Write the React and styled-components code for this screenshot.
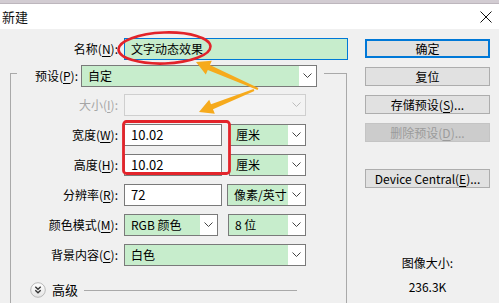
import React from "react";
import styled, { createGlobalStyle } from "styled-components";

const green = "#c7edcc";
const cjk = `"Noto Sans CJK SC", "Microsoft YaHei", sans-serif`;

const GlobalStyle = createGlobalStyle`
  html, body {
    margin: 0;
    padding: 0;
    width: 499px;
    height: 303px;
    overflow: hidden;
    background: #f0f0f0;
  }
  body {
    font-family: ${cjk};
    font-size: 12px;
    line-height: 16px;
    color: #000;
  }
`;

// tapering arrow: thin tail, wide triangular head
function arrowPoints(sx, sy, tx, ty, L = 14, W = 7.5, w1 = 2.7, w0 = 1) {
  const len = Math.hypot(tx - sx, ty - sy);
  const dx = (tx - sx) / len;
  const dy = (ty - sy) / len;
  const nx = -dy;
  const ny = dx;
  const bx = tx - dx * L;
  const by = ty - dy * L;
  const pts = [
    [sx + nx * w0, sy + ny * w0],
    [bx + nx * w1, by + ny * w1],
    [bx + nx * W, by + ny * W],
    [tx, ty],
    [bx - nx * W, by - ny * W],
    [bx - nx * w1, by - ny * w1],
    [sx - nx * w0, sy - ny * w0],
  ];
  return pts.map((p) => p.map((v) => v.toFixed(1)).join(",")).join(" ");
}

export default function App() {
  return (
    <Page>
      <GlobalStyle />
      <TopStrip />
      <TitleBar>
        <Title>新建</Title>
        <svg width="12" height="12" viewBox="0 0 12 12">
          <path d="M0.5 0.5 L11.5 11.5 M11.5 0.5 L0.5 11.5" stroke="#111" strokeWidth="1" />
        </svg>
      </TitleBar>

      <Body>
        <LeftPane>
          <NameRow>
            <Label>
              名称(<U>N</U>):
            </Label>
            <TextBox $w={224} $focused>
              文字动态效果
            </TextBox>
          </NameRow>

          <Group>
            <Legend>
              <LegendInner>
                <PresetLabel>
                  预设(<U>P</U>):
                </PresetLabel>
                <Select w={236} value="自定" />
              </LegendInner>
            </Legend>

            <Rows>
              <Label $disabled>
                大小(<U>I</U>):
              </Label>
              <Select w={182} disabled />

              <Label>
                宽度(<U>W</U>):
              </Label>
              <Pair $gap={7}>
                <TextBox $w={98}>10.02</TextBox>
                <Select w={77} value="厘米" />
              </Pair>

              <Label>
                高度(<U>H</U>):
              </Label>
              <Pair $gap={7}>
                <TextBox $w={98}>10.02</TextBox>
                <Select w={77} value="厘米" />
              </Pair>

              <Label>
                分辨率(<U>R</U>):
              </Label>
              <Pair $gap={5}>
                <TextBox $w={98}>72</TextBox>
                <Select w={79} value="像素/英寸" />
              </Pair>

              <Label>
                颜色模式(<U>M</U>):
              </Label>
              <Pair $gap={10}>
                <Select w={94} value="RGB 颜色" />
                <Select w={78} value="8 位" />
              </Pair>

              <Label>
                背景内容(<U>C</U>):
              </Label>
              <Select w={182} value="白色" />
            </Rows>

            <Advanced>
              <svg width="16" height="16" viewBox="0 0 16 16">
                <defs>
                  <linearGradient id="adv" x1="0" y1="0" x2="0" y2="1">
                    <stop offset="0" stopColor="#ffffff" />
                    <stop offset="1" stopColor="#e4e4e4" />
                  </linearGradient>
                </defs>
                <circle cx="8" cy="8" r="7.3" fill="url(#adv)" stroke="#b8b8b8" />
                <polyline points="5.3,4.8 8,7.2 10.7,4.8" fill="none" stroke="#333" strokeWidth="1.4" />
                <polyline points="5.3,8.3 8,10.7 10.7,8.3" fill="none" stroke="#333" strokeWidth="1.4" />
              </svg>
              <AdvText>高级</AdvText>
              <Rule />
            </Advanced>
          </Group>
        </LeftPane>

        <RightPane>
          <Btn $default>确定</Btn>
          <Btn>复位</Btn>
          <Btn>
            存储预设(<U>S</U>)...
          </Btn>
          <Btn $disabled>
            删除预设(<U>D</U>)...
          </Btn>
          <Btn $space={18}>
            Device Central(<U>E</U>)...
          </Btn>
          <SizeInfo>
            <span>图像大小:</span>
            <span>236.3K</span>
          </SizeInfo>
        </RightPane>
      </Body>

      <Marks width="499" height="303" viewBox="0 0 499 303">
        <ellipse
          cx="164.5"
          cy="48"
          rx="46"
          ry="15.5"
          fill="none"
          stroke="#e2232a"
          strokeWidth="2.6"
          transform="rotate(-2 164.5 48)"
        />
        <rect x="123.5" y="121.5" width="106" height="52" rx="3" fill="none" stroke="#e3242b" strokeWidth="2.8" />
        <polygon points={arrowPoints(258, 89, 196, 62)} fill="#f6aa1c" />
        <polygon points={arrowPoints(254, 90, 199, 112)} fill="#f6aa1c" />
      </Marks>
    </Page>
  );
}

const Select = ({ w, value, disabled }) => (
  <SelectBox $w={w} $disabled={disabled}>
    <SelectValue $disabled={disabled}>{value}</SelectValue>
    <Chevron>
      <svg width="9" height="5" viewBox="0 0 9 5">
        <polyline
          points="0.5,0.5 4.5,4.5 8.5,0.5"
          fill="none"
          stroke={disabled ? "#bdbdbd" : "#444"}
          strokeWidth="1"
        />
      </svg>
    </Chevron>
  </SelectBox>
);

const Page = styled.div`
  position: relative;
  width: 499px;
  height: 303px;
  overflow: hidden;
  background: #f0f0f0;
`;

const TopStrip = styled.div`
  height: 4px;
  background: #d2ccd2;
  border-bottom: 1px solid #bdb6bd;
  box-sizing: border-box;
`;

const TitleBar = styled.div`
  height: 25px;
  background: #fff;
  display: flex;
  align-items: center;
  justify-content: space-between;
  padding: 0 7px 0 2px;
`;

const Title = styled.span`
  font-size: 13px;
  color: #111;
`;

const Body = styled.div`
  display: flex;
`;

const LeftPane = styled.div`
  width: 350px;
  padding-top: 9px;
`;

const NameRow = styled.div`
  display: grid;
  grid-template-columns: 118px auto;
  column-gap: 6px;
  align-items: center;
`;

const Label = styled.span`
  text-align: right;
  white-space: nowrap;
  color: ${(p) => (p.$disabled ? "#a6a6a6" : "#000")};
`;

const U = styled.span`
  text-decoration: underline;
  text-underline-offset: 2px;
`;

const TextBox = styled.div`
  width: ${(p) => p.$w}px;
  height: 22px;
  box-sizing: border-box;
  border: 1px solid ${(p) => (p.$focused ? "#0078d7" : "#7a7a7a")};
  background: ${(p) => (p.$focused ? green : "#fff")};
  display: flex;
  align-items: center;
  padding: 0 6px;
  white-space: nowrap;
  font-size: ${(p) => (p.$focused ? 12 : 13)}px;
`;

const Group = styled.fieldset`
  margin: -1px 0 0 10px;
  width: 337px;
  height: 300px;
  box-sizing: border-box;
  padding: 6px 0 0 0;
  border: 1px solid #a9a9a9;
  min-width: 0;
`;

const Legend = styled.legend`
  margin-left: 6px;
  padding: 5px 7px 0 15px;
`;

const LegendInner = styled.div`
  display: flex;
  align-items: center;
  gap: 3px;
  height: 23px;
`;

const PresetLabel = styled.span`
  width: 46px;
  text-align: right;
  white-space: nowrap;
`;

const Rows = styled.div`
  display: grid;
  grid-template-columns: 107px 182px;
  grid-auto-rows: 23px;
  column-gap: 6px;
  row-gap: 7px;
  align-items: center;
`;

const Pair = styled.div`
  display: flex;
  gap: ${(p) => p.$gap}px;
`;

const SelectBox = styled.div`
  width: ${(p) => p.$w}px;
  height: 22px;
  box-sizing: border-box;
  border: 1px solid ${(p) => (p.$disabled ? "#cfcfcf" : "#7a7a7a")};
  background: ${(p) => (p.$disabled ? "#f3f3f3" : "#fff")};
  display: flex;
`;

const SelectValue = styled.div`
  flex: 1;
  background: ${(p) => (p.$disabled ? "transparent" : green)};
  padding-left: 6px;
  display: flex;
  align-items: center;
  white-space: nowrap;
  overflow: hidden;
`;

const Chevron = styled.div`
  width: 17px;
  display: flex;
  align-items: center;
  justify-content: center;
`;

const Advanced = styled.div`
  display: flex;
  align-items: center;
  margin-top: 16px;
  padding-left: 19px;
  padding-right: 49px;
`;

const AdvText = styled.span`
  margin-left: 6px;
  font-size: 13px;
`;

const Rule = styled.div`
  flex: 1;
  height: 1px;
  background: #a9a9a9;
  margin-left: 6px;
`;

const RightPane = styled.div`
  width: 125px;
  margin-left: 15px;
  padding-top: 10px;
  display: flex;
  flex-direction: column;
  gap: 9px;
`;

const Btn = styled.div`
  height: 19px;
  box-sizing: border-box;
  margin-top: ${(p) => p.$space || 0}px;
  border: ${(p) =>
    p.$default ? "2px solid #0078d7" : p.$disabled ? "1px solid #c4c4c4" : "1px solid #adadad"};
  background: ${(p) => (p.$disabled ? "#cccccc" : "#e1e1e1")};
  color: ${(p) => (p.$disabled ? "#9b9b9b" : "#000")};
  display: flex;
  align-items: center;
  justify-content: center;
  white-space: nowrap;
`;

const SizeInfo = styled.div`
  margin-top: 54px;
  display: flex;
  flex-direction: column;
  align-items: center;
  line-height: 24px;
`;

const Marks = styled.svg`
  position: absolute;
  top: 0;
  left: 0;
  pointer-events: none;
`;
